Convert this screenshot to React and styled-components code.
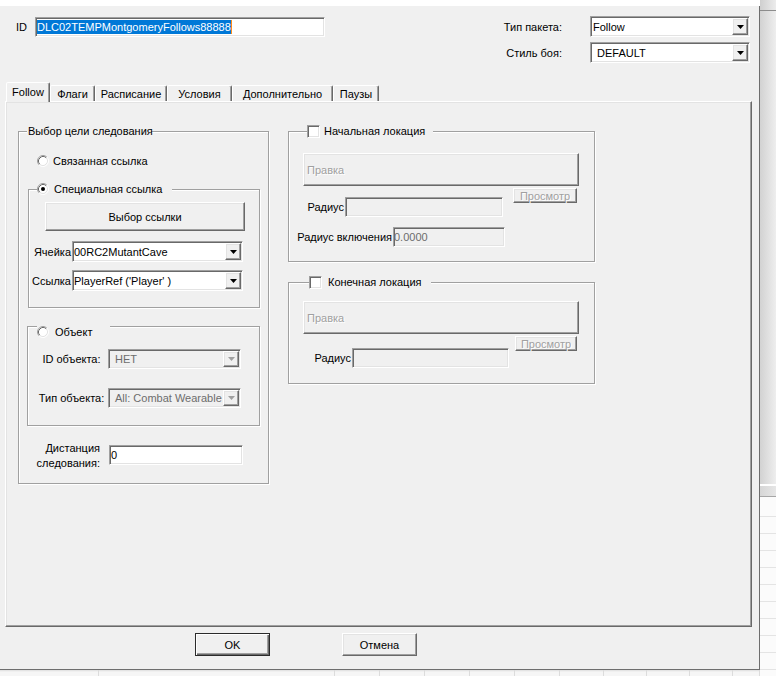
import React from "react";
import styled, { createGlobalStyle, css } from "styled-components";

const GlobalStyle = createGlobalStyle`
  html, body {
    margin: 0;
    padding: 0;
    background: #fff;
  }
  body {
    font-family: "Liberation Sans", Arial, sans-serif;
    font-size: 11px;
    color: #000;
  }
  #root {
    width: 776px;
    height: 676px;
    overflow: hidden;
  }
`;

const raised = css`
  border: 1px solid;
  border-color: #fff #696969 #696969 #fff;
  box-shadow: inset -1px -1px 0 #a0a0a0, inset 1px 1px 0 #e3e3e3;
`;

const sunken = css`
  border: 1px solid;
  border-color: #a0a0a0 #fff #fff #a0a0a0;
  box-shadow: inset 1px 1px 0 #696969, inset -1px -1px 0 #e3e3e3;
`;

const Screen = styled.div`
  display: flex;
  width: 776px;
  height: 676px;
  overflow: hidden;
`;

const Main = styled.div`
  flex: none;
  width: 760px;
  display: flex;
  flex-direction: column;
`;

const TopStrip = styled.div`
  height: 6px;
  background: #fff;
`;

const Dialog = styled.div`
  box-sizing: border-box;
  height: 664px;
  background: #f0f0f0;
  border-right: 1px solid #6e6e6e;
  border-bottom: 1px solid #6e6e6e;
  display: flex;
  flex-direction: column;
`;

const Header = styled.div`
  box-sizing: border-box;
  height: 76px;
  display: flex;
  justify-content: space-between;
  align-items: flex-start;
  padding: 10px 9px 0 16px;
`;

const IdField = styled.div`
  display: flex;
  align-items: center;
  margin-top: 1px;
`;

const IdLabel = styled.span`
  width: 19px;
`;

const TextBox = styled.div`
  box-sizing: border-box;
  width: ${(p) => p.w}px;
  height: ${(p) => p.h || 20}px;
  margin-top: ${(p) => p.mt || 0}px;
  ${sunken};
  background: ${(p) => (p.disabled ? "#f0f0f0" : "#fff")};
  color: ${(p) => (p.disabled ? "#6d6d6d" : "#000")};
  padding: 0 ${(p) => (p.pad === undefined ? 1 : p.pad)}px;
  display: flex;
  align-items: center;
  white-space: nowrap;
  overflow: hidden;
  flex: none;
`;

const Selection = styled.span`
  background: #0078d7;
  color: #fff;
  line-height: 14px;
  border-right: 1px solid #ff8c1a;
`;

const HeaderRight = styled.div`
  display: grid;
  grid-template-columns: auto 160px;
  column-gap: 28px;
  row-gap: 5px;
  align-items: center;
  justify-items: end;
`;

const Combo = styled.div`
  box-sizing: border-box;
  width: ${(p) => p.w}px;
  height: ${(p) => p.h || 21}px;
  ${sunken};
  padding: 1px;
  background: ${(p) => (p.disabled ? "#f0f0f0" : "#fff")};
  display: flex;
  flex: none;
`;

const ComboText = styled.div`
  flex: 1;
  display: flex;
  align-items: center;
  padding-left: ${(p) => p.indent || 0}px;
  color: ${(p) => (p.disabled ? "#6d6d6d" : "#000")};
  white-space: nowrap;
  overflow: hidden;
`;

const ArrowButton = styled.div`
  box-sizing: border-box;
  width: 16px;
  ${raised};
  background: #f0f0f0;
  display: flex;
  align-items: center;
  justify-content: center;
`;

const TabStrip = styled.div`
  display: flex;
  align-items: flex-end;
  height: 19px;
  padding-left: 6px;
`;

const Tab = styled.div`
  box-sizing: border-box;
  position: relative;
  z-index: ${(p) => (p.active ? 1 : 0)};
  width: ${(p) => p.w}px;
  height: ${(p) => (p.active ? 20 : 16)}px;
  margin-bottom: ${(p) => (p.active ? -1 : 0)}px;
  padding-bottom: ${(p) => (p.active ? 1 : 0)}px;
  background: #f0f0f0;
  border: 1px solid;
  border-bottom: none;
  border-color: #fff #696969 transparent #fff;
  border-radius: 2px 2px 0 0;
  box-shadow: inset -1px 0 0 #a0a0a0;
  display: flex;
  align-items: center;
  justify-content: center;
  white-space: nowrap;
`;

const Panel = styled.div`
  box-sizing: border-box;
  margin-left: 5px;
  width: 747px;
  height: 526px;
  border: 1px solid;
  border-color: #fff #696969 #696969 #fff;
  box-shadow: inset -1px -1px 0 #a0a0a0, inset 1px 1px 0 #e3e3e3;
  display: flex;
  align-items: flex-start;
  gap: 19px;
  padding: 29px 0 0 12px;
`;

const Column = styled.div`
  display: flex;
  flex-direction: column;
  align-items: flex-start;
`;

const Group = styled.div`
  box-sizing: border-box;
  flex: none;
  width: ${(p) => p.w}px;
  height: ${(p) => p.h}px;
  margin: ${(p) => p.mt || 0}px 0 0 ${(p) => p.ml || 0}px;
  border: 1px solid #a0a0a0;
  box-shadow: inset 1px 1px 0 #fff, 1px 1px 0 #fff;
  display: flex;
  flex-direction: column;
  align-items: flex-start;
`;

const Legend = styled.div`
  box-sizing: border-box;
  display: flex;
  align-items: center;
  gap: ${(p) => p.gap || 0}px;
  height: ${(p) => p.h || 14}px;
  width: ${(p) => p.w}px;
  margin: -8px 0 0 ${(p) => p.ml}px;
  padding-left: ${(p) => p.pl || 0}px;
  background: #f0f0f0;
  white-space: nowrap;
`;

const OptionRow = styled.div`
  display: flex;
  align-items: center;
  gap: ${(p) => p.gap}px;
  height: 14px;
  margin: ${(p) => p.mt}px 0 0 ${(p) => p.ml}px;
  white-space: nowrap;
`;

const Button = styled.div`
  box-sizing: border-box;
  flex: none;
  width: ${(p) => p.w}px;
  height: ${(p) => p.h}px;
  margin: ${(p) => p.mt || 0}px 0 0 ${(p) => p.ml || 0}px;
  background: #f0f0f0;
  ${(p) =>
    p.primary
      ? css`
          border: 1px solid #2b2b2b;
          box-shadow: inset 1px 1px 0 #fff, inset -1px -1px 0 #696969,
            inset -2px -2px 0 #a0a0a0;
        `
      : raised};
  display: flex;
  align-items: center;
  justify-content: ${(p) => (p.left ? "flex-start" : "center")};
  padding-left: ${(p) => (p.left ? 3 : 0)}px;
  color: ${(p) => (p.disabled ? "#a0a0a0" : "#000")};
  text-shadow: ${(p) => (p.disabled ? "1px 1px 0 #fff" : "none")};
  white-space: nowrap;
`;

const FieldRow = styled.div`
  display: flex;
  align-items: center;
  margin: ${(p) => p.mt || 0}px 0 0 ${(p) => p.ml || 0}px;
`;

const FieldLabel = styled.div`
  box-sizing: border-box;
  flex: none;
  width: ${(p) => p.w}px;
  text-align: ${(p) => p.align || "right"};
  padding-right: ${(p) => (p.align === "center" ? 0 : 1)}px;
  white-space: nowrap;
`;

const SplitRow = styled.div`
  display: flex;
  align-items: flex-start;
`;

const DistanceRow = styled.div`
  display: flex;
  align-items: flex-start;
  gap: 9px;
  margin-top: 15px;
`;

const DistanceLabel = styled.div`
  width: 81px;
  text-align: right;
  line-height: 15px;
`;

const Footer = styled.div`
  display: flex;
  gap: 72px;
  margin-top: 6px;
  padding-left: 195px;
`;

const BottomStrip = styled.div`
  flex: 1;
  display: flex;
  background: linear-gradient(#dedede, #f6f6f6 2px);
`;

const BottomCell = styled.div`
  box-sizing: border-box;
  width: ${(p) => p.w}px;
  border-right: 1px solid #dcdcdc;
`;

const Side = styled.div`
  flex: 1;
  display: flex;
  flex-direction: column;
`;

const SideBand = styled.div`
  flex: ${(p) => (p.grow ? 1 : "none")};
  height: ${(p) => (p.grow ? "auto" : `${p.h}px`)};
  background: ${(p) => p.bg};
`;

const SideGrid = styled.div`
  flex: none;
  height: 179px;
  background-color: #fbfbfb;
  background-image: repeating-linear-gradient(
    to bottom,
    transparent 0,
    transparent 16px,
    #e4e4e4 16px,
    #e4e4e4 17px
  );
  background-position: 0 3px;
`;

function Arrow({ disabled }) {
  return (
    <svg width="7" height="4" viewBox="0 0 7 4">
      <polygon points="0,0 7,0 3.5,4" fill={disabled ? "#a0a0a0" : "#000"} />
    </svg>
  );
}

function Radio({ checked }) {
  return (
    <svg width="12" height="12" viewBox="0 0 12 12" style={{ flex: "none" }}>
      <circle cx="6" cy="6" r="5" fill="#fff" />
      <path d="M2.11 9.89 A5.5 5.5 0 0 1 9.89 2.11" fill="none" stroke="#a0a0a0" />
      <path d="M2.82 9.18 A4.5 4.5 0 0 1 9.18 2.82" fill="none" stroke="#696969" />
      <path d="M9.89 2.11 A5.5 5.5 0 0 1 2.11 9.89" fill="none" stroke="#fff" />
      <path d="M9.18 2.82 A4.5 4.5 0 0 1 2.82 9.18" fill="none" stroke="#e3e3e3" />
      {checked && <circle cx="6" cy="6" r="2" fill="#000" />}
    </svg>
  );
}

const CheckBox = styled.span`
  box-sizing: border-box;
  flex: none;
  width: 13px;
  height: 13px;
  background: #fff;
  ${sunken};
`;

function ComboBox({ w, h, value, indent, disabled }) {
  return (
    <Combo w={w} h={h} disabled={disabled}>
      <ComboText indent={indent} disabled={disabled}>
        {value}
      </ComboText>
      <ArrowButton>
        <Arrow disabled={disabled} />
      </ArrowButton>
    </Combo>
  );
}

const tabs = [
  { label: "Follow", w: 44, active: true },
  { label: "Флаги", w: 45 },
  { label: "Расписание", w: 72 },
  { label: "Условия", w: 65 },
  { label: "Дополнительно", w: 101 },
  { label: "Паузы", w: 46 },
];

const bottomCells = [99, 236, 45, 45, 45, 45, 45, 44, 43, 43, 43, 27];

export default function App() {
  return (
    <>
      <GlobalStyle />
      <Screen>
        <Main>
          <TopStrip />
          <Dialog>
            <Header>
              <IdField>
                <IdLabel>ID</IdLabel>
                <TextBox w={290} pad={1}>
                  <Selection>DLC02TEMPMontgomeryFollows88888</Selection>
                </TextBox>
              </IdField>
              <HeaderRight>
                <span>Тип пакета:</span>
                <ComboBox w={160} value="Follow" indent={1} />
                <span>Стиль боя:</span>
                <ComboBox w={160} value="DEFAULT" indent={5} />
              </HeaderRight>
            </Header>

            <TabStrip>
              {tabs.map((t) => (
                <Tab key={t.label} w={t.w} active={t.active}>
                  {t.label}
                </Tab>
              ))}
            </TabStrip>

            <Panel>
              <Group w={251} h={353}>
                <Legend ml={8} w={124} pl={1}>
                  Выбор цели следования
                </Legend>
                <OptionRow mt={16} ml={18} gap={4}>
                  <Radio />
                  Связанная ссылка
                </OptionRow>

                <Group w={232} h={119} mt={21} ml={9}>
                  <Legend ml={8} w={135} gap={5}>
                    <Radio checked />
                    Специальная ссылка
                  </Legend>
                  <Button w={200} h={29} mt={6} ml={16}>
                    Выбор ссылки
                  </Button>
                  <FieldRow mt={10}>
                    <FieldLabel w={43}>Ячейка</FieldLabel>
                    <ComboBox w={171} value="00RC2MutantCave" />
                  </FieldRow>
                  <FieldRow mt={8}>
                    <FieldLabel w={43}>Ссылка</FieldLabel>
                    <ComboBox w={171} value="PlayerRef ('Player' )" />
                  </FieldRow>
                </Group>

                <Group w={233} h={100} mt={18} ml={8}>
                  <Legend ml={9} w={73} h={26} gap={6}>
                    <Radio />
                    Объект
                  </Legend>
                  <FieldRow mt={4} ml={7}>
                    <FieldLabel w={73} align="center">
                      ID объекта:
                    </FieldLabel>
                    <ComboBox w={133} h={20} value="НЕТ" indent={5} disabled />
                  </FieldRow>
                  <FieldRow mt={19} ml={7}>
                    <FieldLabel w={73} align="center">
                      Тип объекта:
                    </FieldLabel>
                    <ComboBox
                      w={133}
                      h={20}
                      value="All: Combat Wearable"
                      indent={5}
                      disabled
                    />
                  </FieldRow>
                </Group>

                <DistanceRow>
                  <DistanceLabel>
                    Дистанция
                    <br />
                    следования:
                  </DistanceLabel>
                  <TextBox w={134} mt={4}>
                    0
                  </TextBox>
                </DistanceRow>
              </Group>

              <Column>
                <Group w={307} h={131}>
                  <Legend ml={18} w={126} gap={4}>
                    <CheckBox />
                    Начальная локация
                  </Legend>
                  <Button w={276} h={33} mt={15} ml={14} left disabled>
                    Правка
                  </Button>
                  <SplitRow>
                    <FieldRow mt={11}>
                      <FieldLabel w={56}>Радиус</FieldLabel>
                      <TextBox w={158} disabled />
                    </FieldRow>
                    <Button w={64} h={15} mt={2} ml={10} disabled>
                      Просмотр
                    </Button>
                  </SplitRow>
                  <FieldRow mt={10}>
                    <FieldLabel w={104}>Радиус включения</FieldLabel>
                    <TextBox w={112} pad={0} disabled>
                      0.0000
                    </TextBox>
                  </FieldRow>
                </Group>

                <Group w={307} h={102} mt={20}>
                  <Legend ml={20} w={122} gap={6}>
                    <CheckBox />
                    Конечная локация
                  </Legend>
                  <Button w={276} h={33} mt={12} ml={14} left disabled>
                    Правка
                  </Button>
                  <SplitRow>
                    <FieldRow mt={14}>
                      <FieldLabel w={63}>Радиус</FieldLabel>
                      <TextBox w={157} disabled />
                    </FieldRow>
                    <Button w={62} h={15} mt={2} ml={6} disabled>
                      Просмотр
                    </Button>
                  </SplitRow>
                </Group>
              </Column>
            </Panel>

            <Footer>
              <Button w={75} h={23} primary>
                OK
              </Button>
              <Button w={75} h={23}>
                Отмена
              </Button>
            </Footer>
          </Dialog>
          <BottomStrip>
            {bottomCells.map((w, i) => (
              <BottomCell key={i} w={w} />
            ))}
          </BottomStrip>
        </Main>

        <Side>
          <SideBand h={10} bg="linear-gradient(to right, #cfcfcf, #ececec)" />
          <SideBand h={1} bg="#8c8c8c" />
          <SideBand grow bg="linear-gradient(to right, #d2d2d2, #eeeeee)" />
          <SideBand h={2} bg="#fff" />
          <SideBand h={10} bg="linear-gradient(to right, #d6d6d6, #e6e6e6)" />
          <SideBand h={1} bg="#a6a6a6" />
          <SideGrid />
        </Side>
      </Screen>
    </>
  );
}
